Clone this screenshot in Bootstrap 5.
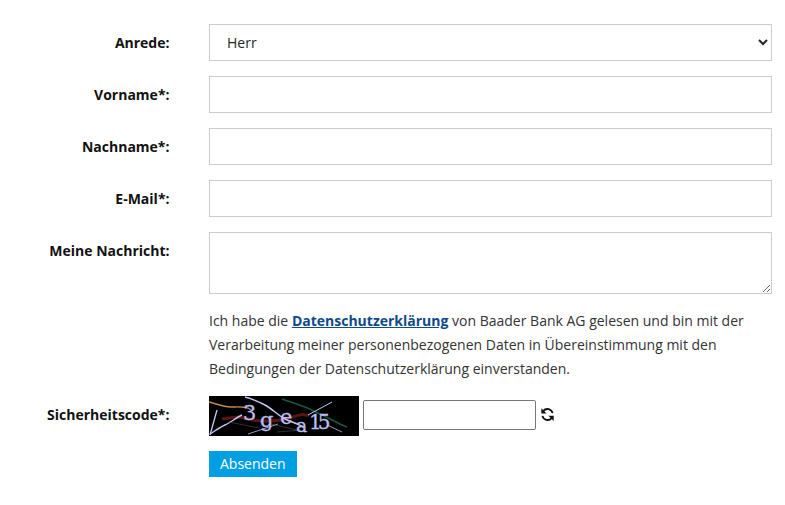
<!DOCTYPE html>
<html lang="de">
<head>
<meta charset="utf-8">
<title>Kontakt</title>
<link rel="stylesheet" href="https://cdn.jsdelivr.net/npm/bootstrap@5.3.0/dist/css/bootstrap.min.css">
<style>
html,body{background:#fff;overflow:hidden}
body{font-family:"Open Sans","Liberation Sans",sans-serif;font-size:14px;color:#212529;line-height:24px}
.kf-wrap{padding:24px 13px 0 0;width:785px}
.kf-row{margin-bottom:15px}
.kf-label{width:169.5px;flex:none;text-align:right;font-weight:700;color:#111;padding-top:7px;line-height:24px;margin:0}
.kf-field{margin-left:39.5px;width:563px;flex:none}
.kf-control.form-control,.kf-control.form-select{border:1px solid #ccc;border-radius:0;height:37px;font-size:14px;color:#212529;padding:6px 17px;box-shadow:none;background-color:#fff}
.kf-control.form-select{appearance:auto;-webkit-appearance:auto;background-image:none;padding:6px 13px}
textarea.kf-control.form-control{height:62px;resize:vertical;display:block}
.kf-text{margin:15px 0 15px;color:#333;line-height:24px}
.kf-text a{color:#0d4a8a;font-weight:700}
.kf-cap{display:block;width:150px;height:40px;flex:none;background:#000}
.kf-capinput{width:173px;height:30px;border:1px solid #767676;border-radius:2px;margin:0 0 2px 4px;padding:1px 2px;background:#fff}
.kf-refresh{width:15px;height:15px;margin:0 0 3px 4px;flex:none}
.kf-btn.btn{background:#009fe3;border:0;border-radius:0;color:#fff;font-size:14px;line-height:20px;padding:3px 11px;height:26px}
.kf-captext{font-family:"DejaVu Serif",serif;fill:#b9bdf0;stroke:#b9bdf0;stroke-width:.3}
</style>
</head>
<body>
<form class="kf-wrap">
  <div class="d-flex kf-row">
    <label class="kf-label" for="a">Anrede:</label>
    <div class="kf-field"><select id="a" class="form-select kf-control"><option>Herr</option></select></div>
  </div>
  <div class="d-flex kf-row">
    <label class="kf-label" for="v">Vorname*:</label>
    <div class="kf-field"><input id="v" class="form-control kf-control"></div>
  </div>
  <div class="d-flex kf-row">
    <label class="kf-label" for="n">Nachname*:</label>
    <div class="kf-field"><input id="n" class="form-control kf-control"></div>
  </div>
  <div class="d-flex kf-row">
    <label class="kf-label" for="e">E-Mail*:</label>
    <div class="kf-field"><input id="e" class="form-control kf-control"></div>
  </div>
  <div class="d-flex">
    <label class="kf-label" for="m">Meine Nachricht:</label>
    <div class="kf-field"><textarea id="m" class="form-control kf-control"></textarea></div>
  </div>
  <div class="d-flex">
    <div class="kf-label"></div>
    <div class="kf-field"><p class="kf-text">Ich habe die <a href="#">Datenschutzerklärung</a> von Baader Bank AG gelesen und bin mit der Verarbeitung meiner personenbezogenen Daten in Übereinstimmung mit den Bedingungen der Datenschutzerklärung einverstanden.</p></div>
  </div>
  <div class="d-flex kf-row">
    <label class="kf-label" for="s">Sicherheitscode*:</label>
    <div class="kf-field d-flex align-items-center">
      <svg class="kf-cap" viewBox="0 0 150 40" aria-label="Captcha">
        <rect width="150" height="40" fill="#000"/>
        <path d="M0 6C8 8 14 11 22 11S38 10 42 14" stroke="#c08a4a" stroke-width="1.4" fill="none"/>
        <path d="M73 3C82 6 90 9 96 11S106 16 113 19S130 28 138 31" stroke="#14593f" stroke-width="1.7" fill="none"/>
        <path d="M13 23C24 21 32 20 40 23S70 26 84 21S92 20 100 19" stroke="#5a1414" stroke-width="3" fill="none"/>
        <path d="M8 14L1 39" stroke="#c3c8f5" stroke-width="1.3" fill="none"/>
        <path d="M1 38C6 35 11 31 16 29S28 21 33 19" stroke="#c3c8f5" stroke-width="1.4" fill="none"/>
        <path d="M36 1C44 3 50 6 56 9S70 20 76 23S90 28 96 32" stroke="#c3c8f5" stroke-width="1.4" fill="none"/>
        <path d="M99 19L123 6" stroke="#c3c8f5" stroke-width="1" fill="none"/>
        <path d="M118 29L133 36" stroke="#b9bdf0" stroke-width=".8" fill="none"/>
        <path d="M39 38L69 28" stroke="#b9bdf0" stroke-width=".8" fill="none"/>
        <path d="M20 26L50 32M68 36L92 34M62 28L88 34" stroke="#555" stroke-width=".6" fill="none"/>
        <text class="kf-captext" x="34" y="24" font-size="21">3</text>
        <text class="kf-captext" x="51" y="31" font-size="21">g</text>
        <text class="kf-captext" x="71" y="28" font-size="21">e</text>
        <text class="kf-captext" x="87" y="36" font-size="19">a</text>
        <text class="kf-captext" x="100" y="33" font-size="20" letter-spacing="-4">15</text>
      </svg>
      <input id="s" class="kf-capinput">
      <svg class="kf-refresh" viewBox="0 0 16 16" aria-label="Neu laden">
        <path d="M13.4 6.6A5.6 5.6 0 0 0 3.6 4.2" stroke="#111" stroke-width="1.9" fill="none"/>
        <path d="M1.4 1.2V6.8H7Z" fill="#111"/>
        <path d="M2.6 9.4A5.6 5.6 0 0 0 12.4 11.8" stroke="#111" stroke-width="1.9" fill="none"/>
        <path d="M14.6 14.8V9.2H9Z" fill="#111"/>
      </svg>
    </div>
  </div>
  <div class="d-flex">
    <div class="kf-label"></div>
    <div class="kf-field"><button type="button" class="btn kf-btn">Absenden</button></div>
  </div>
</form>
<script src="https://cdn.jsdelivr.net/npm/bootstrap@5.3.0/dist/js/bootstrap.bundle.min.js"></script>
</body>
</html>
